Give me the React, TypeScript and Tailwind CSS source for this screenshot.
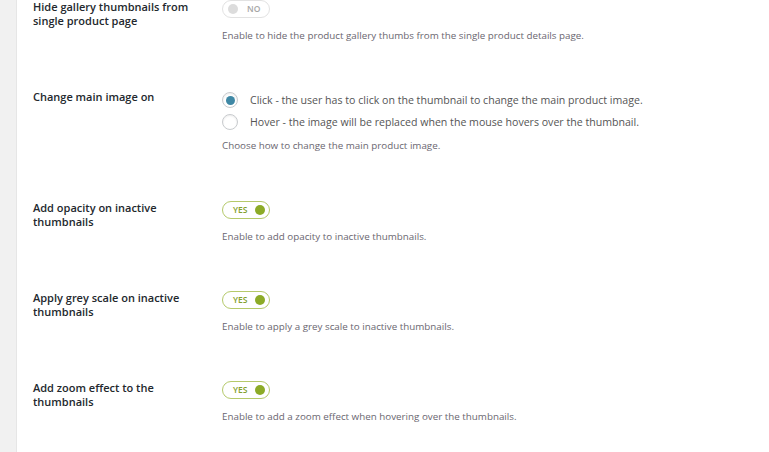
import React from "react";

type ToggleProps = { on: boolean };

function Toggle({ on }: ToggleProps) {
  if (on) {
    return (
      <div className="flex h-[18px] w-[48px] items-center justify-between rounded-full border border-[#b5c96a] bg-white pl-[10px] pr-[4px]">
        <span className="text-[8.5px] font-semibold leading-none text-[#83a02b]">YES</span>
        <span className="h-[10px] w-[10px] rounded-full bg-[#8cab26]" />
      </div>
    );
  }
  return (
    <div className="flex h-[18px] w-[48px] items-center gap-[9px] rounded-full border border-[#e2e2e2] bg-white pl-[5px]">
      <span className="h-[10px] w-[10px] rounded-full bg-[#dcdcdc]" />
      <span className="text-[8.5px] font-semibold leading-none text-[#a6a6a6]">NO</span>
    </div>
  );
}

function Radio({ checked, label }: { checked: boolean; label: string }) {
  return (
    <div className="flex h-[20px] items-center">
      <span className="flex h-[16px] w-[16px] items-center justify-center rounded-full border border-[#c8cbce] bg-white shadow-[inset_0_1px_2px_rgba(0,0,0,0.08)]">
        {checked && <span className="h-[9px] w-[9px] rounded-full bg-[#3f88a5]" />}
      </span>
      <span className="ml-[12px] text-[10.6px] leading-[14px] text-[#555]">{label}</span>
    </div>
  );
}

type ToggleRow = { label: string[]; on: boolean; desc: string };

function SettingRow({ label, on, desc }: ToggleRow) {
  return (
    <div className="flex">
      <div className="w-[189px] shrink-0 text-[11px] font-semibold leading-[14px] text-[#23282d]">
        {label.map((l) => (
          <div key={l}>{l}</div>
        ))}
      </div>
      <div className="flex flex-col">
        <Toggle on={on} />
        <p className="mt-[11px] text-[9.8px] leading-[14px] text-[#6a6670]">{desc}</p>
      </div>
    </div>
  );
}

export default function App() {
  const rows: ToggleRow[] = [
    {
      label: ["Add opacity on inactive", "thumbnails"],
      on: true,
      desc: "Enable to add opacity to inactive thumbnails.",
    },
    {
      label: ["Apply grey scale on inactive", "thumbnails"],
      on: true,
      desc: "Enable to apply a grey scale to inactive thumbnails.",
    },
    {
      label: ["Add zoom effect to the", "thumbnails"],
      on: true,
      desc: "Enable to add a zoom effect when hovering over the thumbnails.",
    },
  ];

  return (
    <div
      className="flex h-[452px] w-[769px] overflow-hidden bg-white"
      style={{ fontFamily: '"Open Sans", "Noto Sans", sans-serif' }}
    >
      <div className="w-[17px] shrink-0 border-r border-[#e6e6e6] bg-[#f1f1f1]" />
      <div className="flex flex-1 flex-col pl-[16px]">
        <div className="mb-[47px]">
          <SettingRow
            label={["Hide gallery thumbnails from", "single product page"]}
            on={false}
            desc="Enable to hide the product gallery thumbs from the single product details page."
          />
        </div>

        <div className="mb-[48px] flex">
          <div className="w-[189px] shrink-0 text-[11px] font-semibold leading-[14px] text-[#23282d]">
            Change main image on
          </div>
          <div className="flex flex-col gap-[2px]">
            <Radio
              checked
              label="Click - the user has to click on the thumbnail to change the main product image."
            />
            <Radio
              checked={false}
              label="Hover - the image will be replaced when the mouse hovers over the thumbnail."
            />
            <p className="mt-[5px] text-[9.8px] leading-[14px] text-[#6a6670]">
              Choose how to change the main product image.
            </p>
          </div>
        </div>

        {rows.map((r) => (
          <div key={r.label.join(" ")} className="mb-[47px]">
            <SettingRow {...r} />
          </div>
        ))}
      </div>
    </div>
  );
}
